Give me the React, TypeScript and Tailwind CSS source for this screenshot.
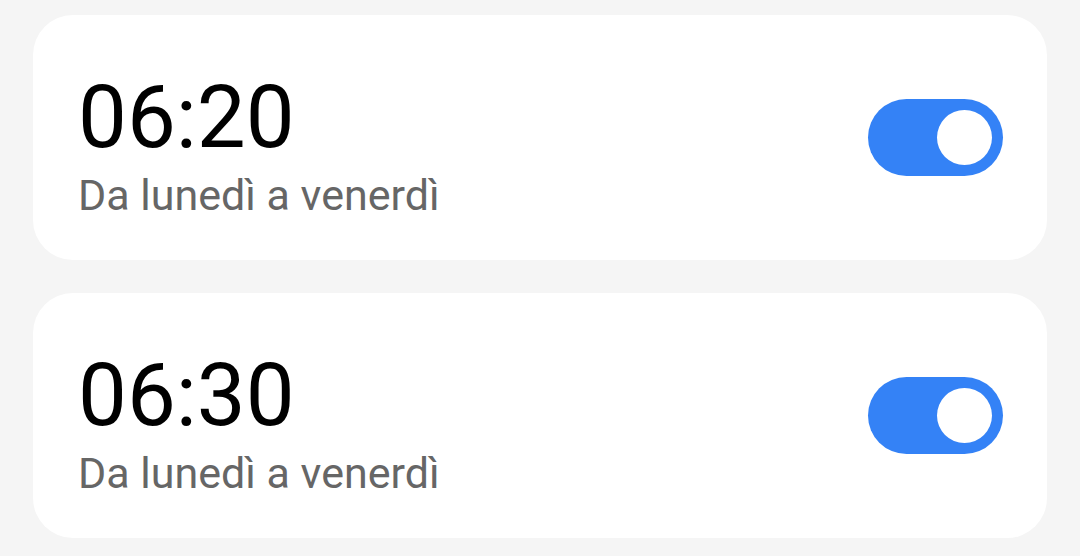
import React from "react";

function Toggle() {
  return (
    <div className="flex h-[77px] w-[135px] items-center justify-end rounded-full bg-[#3482f6] pr-[11px]">
      <div className="h-[55px] w-[55px] rounded-full bg-white" />
    </div>
  );
}

function AlarmCard({ time, days }: { time: string; days: string }) {
  return (
    <div className="flex h-[245px] items-stretch justify-between rounded-[40px] bg-white pl-[45px] pr-[44px]">
      <div className="flex flex-col pt-[59px]">
        <div className="text-[87px] leading-none text-black">{time}</div>
        <div className="mt-[13px] text-[43px] leading-none text-[#666666]">{days}</div>
      </div>
      <div className="flex items-center">
        <Toggle />
      </div>
    </div>
  );
}

export default function App() {
  return (
    <div
      className="flex h-[556px] w-[1080px] flex-col gap-[33px] bg-[#f5f5f5] px-[33px] pt-[15px]"
      style={{ fontFamily: "Roboto, 'Noto Sans', sans-serif" }}
    >
      <AlarmCard time="06:20" days="Da lunedì a venerdì" />
      <AlarmCard time="06:30" days="Da lunedì a venerdì" />
    </div>
  );
}
